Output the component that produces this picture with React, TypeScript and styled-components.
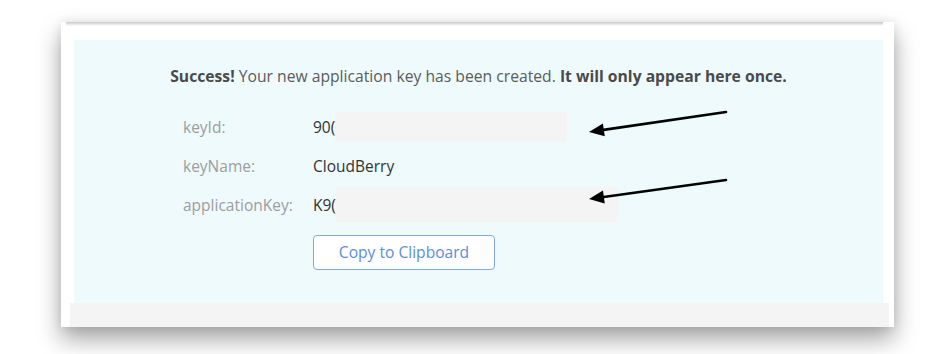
import React from 'react'
import styled, { createGlobalStyle } from 'styled-components'

const GlobalStyle = createGlobalStyle`
  html, body {
    margin: 0;
    padding: 0;
    background: #ffffff;
  }
  body {
    font-family: 'Open Sans', 'Liberation Sans', sans-serif;
    -webkit-font-smoothing: antialiased;
  }
`

const Page = styled.div`
  width: 936px;
  height: 354px;
  padding: 22px 0 0 61px;
  box-sizing: border-box;
  overflow: hidden;
`

const Card = styled.section`
  width: 833px;
  height: 305px;
  background: #ffffff;
  box-shadow: 0 12px 22px rgba(0, 0, 0, 0.36), 0 0 10px rgba(0, 0, 0, 0.08);
  padding: 0 11px 0 13px;
  box-sizing: border-box;
  display: flex;
  flex-direction: column;
`

const TopEdge = styled.div`
  height: 4px;
  margin: 0 0 14px -8px;
  background: linear-gradient(#c9c9c9, rgba(255, 255, 255, 0));
`

const Panel = styled.div`
  position: relative;
  height: 263px;
  background: #effafd;
  padding: 26px 0 0 109px;
  box-sizing: border-box;
`

const Message = styled.p`
  margin: 0 0 21px -109px;
  font-size: 15.7px;
  line-height: 20px;
  color: #5a5a5a;
  text-align: center;

  b {
    color: #4a4a4a;
    font-weight: 700;
  }
`

const Fields = styled.div`
  display: grid;
  grid-template-columns: 130px auto;
  grid-auto-rows: 39px;
  align-items: center;
`

const Label = styled.span`
  font-size: 15.5px;
  color: #9d9d9d;
`

const Value = styled.span`
  display: flex;
  align-items: center;
  font-size: 15.5px;
  color: #333333;
`

const Redacted = styled.span<{ $w: number; $h: number }>`
  display: inline-block;
  width: ${(p) => p.$w}px;
  height: ${(p) => p.$h}px;
  background: #f4f4f4;
`

const Actions = styled.div`
  grid-column: 2;
  margin-top: 17px;
`

const CopyButton = styled.button`
  width: 182px;
  height: 35px;
  background: #ffffff;
  border: 1.5px solid #80a9e2;
  border-radius: 4px;
  font-family: 'Open Sans', 'Liberation Sans', sans-serif;
  font-size: 15.6px;
  color: #5c8ed8;
  cursor: pointer;
`

const Arrows = styled.svg`
  position: absolute;
  left: 506px;
  top: 65px;
`

const Footer = styled.div`
  height: 24px;
  margin: 0 -6px 0 -4px;
  background: #f4f4f4;
`

const Arrow = ({ tail, tip }: { tail: [number, number]; tip: [number, number] }) => {
  const dx = tip[0] - tail[0]
  const dy = tip[1] - tail[1]
  const len = Math.hypot(dx, dy)
  const ux = dx / len
  const uy = dy / len
  const bx = tip[0] - ux * 15
  const by = tip[1] - uy * 15
  const px = -uy * 6.5
  const py = ux * 6.5
  return (
    <g>
      <line x1={tail[0]} y1={tail[1]} x2={bx + ux * 2} y2={by + uy * 2} stroke="#000" strokeWidth="2.6" strokeLinecap="round" />
      <polygon points={`${tip[0]},${tip[1]} ${bx + px},${by + py} ${bx - px},${by - py}`} fill="#000" />
    </g>
  )
}

const App = () => (
  <Page>
    <GlobalStyle />
    <Card>
      <TopEdge />
      <Panel>
        <Message>
          <b>Success!</b> Your new application key has been created. <b>It will only appear here once.</b>
        </Message>
        <Fields>
          <Label>keyId:</Label>
          <Value>
            90(
            <Redacted $w={232} $h={30} />
          </Value>
          <Label>keyName:</Label>
          <Value>CloudBerry</Value>
          <Label>applicationKey:</Label>
          <Value>
            K9(
            <Redacted $w={282} $h={36} />
          </Value>
          <Actions>
            <CopyButton>Copy to Clipboard</CopyButton>
          </Actions>
        </Fields>
        <Arrows width="160" height="100" viewBox="0 0 160 100">
          <Arrow tail={[146, 7]} tip={[9, 27]} />
          <Arrow tail={[146, 75]} tip={[9, 94]} />
        </Arrows>
      </Panel>
      <Footer />
    </Card>
  </Page>
)

export default App
